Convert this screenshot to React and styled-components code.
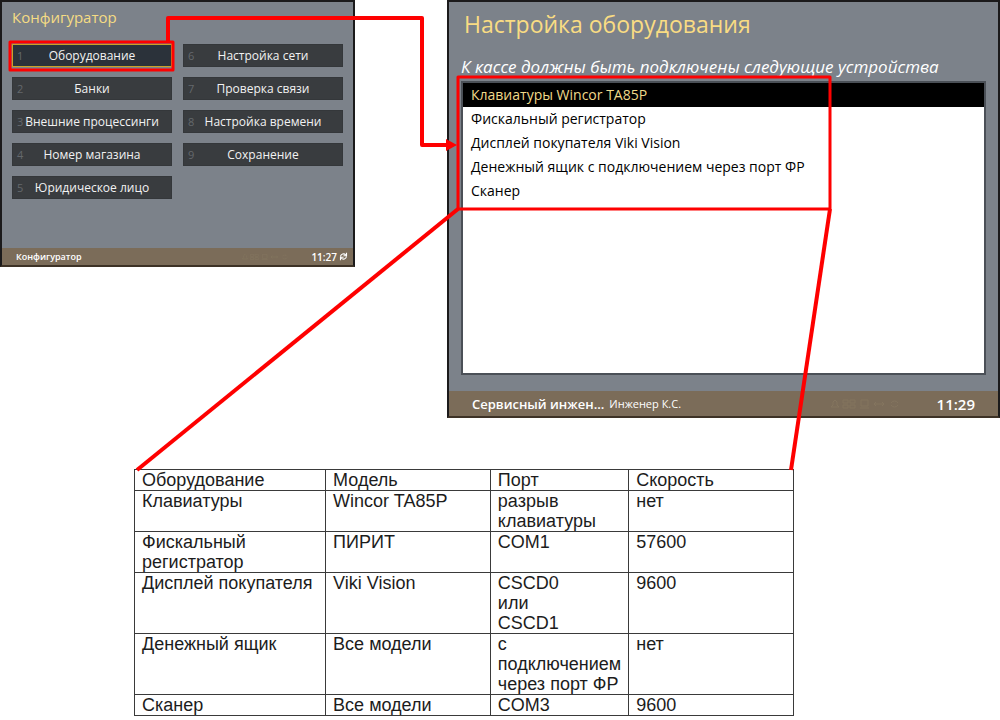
import React, { useState } from "react";
import styled, { createGlobalStyle } from "styled-components";

const GlobalStyle = createGlobalStyle`
  * {
    box-sizing: border-box;
  }

  body {
    margin: 0;
    background: #ffffff;
    font-family: "Open Sans", "Noto Sans", sans-serif;
  }
`;

const Page = styled.main`
  position: relative;
  min-height: 720px;
  overflow: hidden;
`;

const Screens = styled.div`
  display: grid;
  grid-template-columns: 355fr 553fr;
  column-gap: 92px;
  align-items: start;
`;

const Screen = styled.section`
  display: flex;
  flex-direction: column;
  min-width: 0;
  background: #7c828a;
  border: 2px solid #1b1a1b;
  border-bottom-color: #3d3226;
`;

const MenuBody = styled.div`
  padding: 4px 10px 49px;
`;

const MenuTitle = styled.h2`
  margin: 0 0 16px;
  font-size: 15px;
  line-height: 22px;
  font-weight: 400;
  color: #f5dc84;
`;

const MenuGrid = styled.div`
  display: grid;
  grid-template-columns: 1fr 1fr;
  grid-template-rows: repeat(5, 23px);
  grid-auto-flow: column;
  gap: 10px 11px;
`;

const MenuButton = styled.button`
  display: grid;
  align-items: center;
  padding: 0 4px;
  border: 1px solid ${(props) => (props.$active ? "#c9a227" : "#34373a")};
  background: ${(props) => (props.$active ? "#2b323a" : "#393c3f")};
  color: #f2f2f2;
  font-family: inherit;
  font-size: 12px;
  line-height: 20px;
  white-space: nowrap;
  cursor: pointer;

  span {
    grid-area: 1 / 1;
  }
`;

const Num = styled.span`
  justify-self: start;
  font-size: 11px;
  color: #64686c;
`;

const StatusBar = styled.footer`
  display: flex;
  align-items: center;
  height: ${(props) => (props.$large ? "25px" : "17px")};
  padding: ${(props) => (props.$large ? "0 23px" : "0 5px 0 14px")};
  background: #7b6c59;
  color: #ffffff;
  font-size: ${(props) => (props.$large ? "13px" : "9px")};
  font-weight: 600;
  white-space: nowrap;
`;

const UserName = styled.span`
  margin-left: 5px;
  font-size: 11px;
  font-weight: 400;
`;

const Clock = styled.time`
  font-size: ${(props) => (props.$large ? "15px" : "10px")};
`;

const Tray = styled.svg`
  margin-left: auto;
  margin-right: ${(props) => (props.$large ? "36px" : "22px")};
  width: ${(props) => (props.$large ? "72px" : "48px")};
  fill: none;
  stroke: #84755f;
`;

const SyncIcon = styled.svg`
  width: 9px;
  height: 9px;
  margin-left: 2px;
  fill: none;
  stroke: #ffffff;
  stroke-width: 1.5;
`;

const SetupBody = styled.div`
  padding: 4px 12px 16px;
`;

const SetupTitle = styled.h1`
  margin: 0 0 12px;
  padding-left: 3px;
  font-size: 23px;
  line-height: 36px;
  font-weight: 400;
  white-space: nowrap;
  color: #f9dc83;
`;

const Hint = styled.p`
  margin: 0 0 1px;
  font-size: 17px;
  line-height: 26px;
  font-style: italic;
  white-space: nowrap;
  color: #ffffff;
`;

const DeviceList = styled.ul`
  height: 294px;
  margin: 0;
  padding: 0;
  list-style: none;
  background: #ffffff;
  border: 2px solid #4b5057;
`;

const DeviceButton = styled.button`
  display: block;
  width: 100%;
  height: 24px;
  padding: 0 8px;
  border: 0;
  background: ${(props) => (props.$active ? "#000000" : "#ffffff")};
  color: ${(props) => (props.$active ? "#f0d98a" : "#000000")};
  font-family: inherit;
  font-size: 14px;
  line-height: 24px;
  font-weight: 400;
  text-align: left;
  white-space: nowrap;
  cursor: pointer;
`;

const SpecTable = styled.table`
  width: 66%;
  margin: 51px 0 0 134px;
  border-collapse: collapse;
  table-layout: fixed;
  font-family: "Liberation Sans", Arial, sans-serif;
  font-size: 18px;
  line-height: 20px;
  color: #1c1c1c;

  th,
  td {
    padding: 0 2px 0 7px;
    border: 1px solid #3a3a3a;
    font-weight: 400;
    text-align: left;
    vertical-align: top;
  }
`;

const Col = styled.col`
  width: ${(props) => props.$share}%;
`;

const Marks = styled.svg`
  position: absolute;
  top: 0;
  left: 0;
  width: 100%;
  height: 720px;
  fill: none;
  stroke: #fe0000;
  stroke-width: 4;
  stroke-linejoin: round;
  pointer-events: none;
`;

const menuItems = [
  "Оборудование",
  "Банки",
  "Внешние процессинги",
  "Номер магазина",
  "Юридическое лицо",
  "Настройка сети",
  "Проверка связи",
  "Настройка времени",
  "Сохранение",
];

const devices = [
  "Клавиатуры Wincor TA85P",
  "Фискальный регистратор",
  "Дисплей покупателя Viki Vision",
  "Денежный ящик с подключением через порт ФР",
  "Сканер",
];

const specs = [
  ["Клавиатуры", "Wincor TA85P", "разрыв клавиатуры", "нет"],
  ["Фискальный регистратор", "ПИРИТ", "COM1", "57600"],
  ["Дисплей покупателя", "Viki Vision", "CSCD0\nили\nCSCD1", "9600"],
  ["Денежный ящик", "Все модели", "с подключением через порт ФР", "нет"],
  ["Сканер", "Все модели", "COM3", "9600"],
];

function TrayIcons({ large }) {
  return (
    <Tray $large={large} viewBox="0 0 72 12" aria-hidden="true">
      <path d="M2 9h8L8 7V4L6 2 4 4v3zM14 2h5v3h-5zM21 2h5v3h-5zM14 7h5v3h-5zM21 7h5v3h-5z" />
      <path d="M32 2h7v6h-7zM31 10h9M45 6h10M47 4l-2 2 2 2M53 4l2 2-2 2M62 5a4 4 0 0 1 7 0M69 7a4 4 0 0 1-7 0" />
    </Tray>
  );
}

function MenuScreen() {
  const [active, setActive] = useState(0);

  return (
    <Screen>
      <MenuBody>
        <MenuTitle>Конфигуратор</MenuTitle>
        <MenuGrid>
          {menuItems.map((item, i) => (
            <MenuButton
              key={item}
              type="button"
              $active={i === active}
              onClick={() => setActive(i)}
            >
              <Num>{i + 1}</Num>
              <span>{item}</span>
            </MenuButton>
          ))}
        </MenuGrid>
      </MenuBody>
      <StatusBar>
        <span>Конфигуратор</span>
        <TrayIcons />
        <Clock>11:27</Clock>
        <SyncIcon viewBox="0 0 12 12" aria-hidden="true">
          <path d="M2 6a4 4 0 0 1 7-2M10 6a4 4 0 0 1-7 2M10 1v4H6M2 11V7h4" />
        </SyncIcon>
      </StatusBar>
    </Screen>
  );
}

function SetupScreen() {
  const [active, setActive] = useState(0);

  return (
    <Screen>
      <SetupBody>
        <SetupTitle>Настройка оборудования</SetupTitle>
        <Hint>К кассе должны быть подключены следующие устройства</Hint>
        <DeviceList>
          {devices.map((device, i) => (
            <li key={device}>
              <DeviceButton
                type="button"
                $active={i === active}
                onClick={() => setActive(i)}
              >
                {device}
              </DeviceButton>
            </li>
          ))}
        </DeviceList>
      </SetupBody>
      <StatusBar $large>
        <span>Сервисный инжен...</span>
        <UserName>Инженер К.С.</UserName>
        <TrayIcons large />
        <Clock $large>11:29</Clock>
      </StatusBar>
    </Screen>
  );
}

function Specs() {
  return (
    <SpecTable>
      <colgroup>
        <Col $share={29} />
        <Col $share={25} />
        <Col $share={21} />
        <Col $share={25} />
      </colgroup>
      <thead>
        <tr>
          <th scope="col">Оборудование</th>
          <th scope="col">Модель</th>
          <th scope="col">Порт</th>
          <th scope="col">Скорость</th>
        </tr>
      </thead>
      <tbody>
        {specs.map((row) => (
          <tr key={row[0]}>
            {row.map((cell, i) => (
              <td key={i}>
                {cell.split("\n").map((line) => (
                  <div key={line}>{line}</div>
                ))}
              </td>
            ))}
          </tr>
        ))}
      </tbody>
    </SpecTable>
  );
}

// red frames, the arrow and the callout lines down to the table
function Callouts() {
  return (
    <Marks viewBox="0 0 1000 720" preserveAspectRatio="none" aria-hidden="true">
      <path d="M10 42H173V70H10Z" strokeWidth="3" />
      <path d="M168 41V18H422V145H450" />
      <path d="M446 139L457 145L446 151Z" fill="#fe0000" stroke="none" />
      <path d="M458 77H830V209H458Z" strokeWidth="3" />
      <path d="M458 209L137 470" />
      <path d="M830 209L791 470" />
    </Marks>
  );
}

function App() {
  return (
    <Page>
      <GlobalStyle />
      <Screens>
        <MenuScreen />
        <SetupScreen />
      </Screens>
      <Specs />
      <Callouts />
    </Page>
  );
}

export default App;
